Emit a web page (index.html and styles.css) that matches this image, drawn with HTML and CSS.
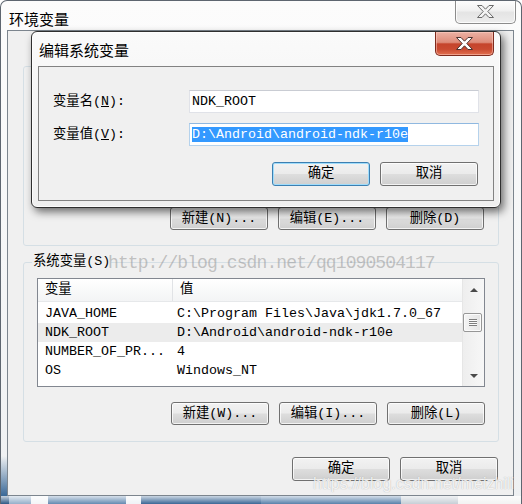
FILE: index.html
```html
<!DOCTYPE html>
<html lang="zh-CN">
<head>
<meta charset="utf-8">
<title>环境变量</title>
<link rel="stylesheet" href="styles.css">
</head>
<body>
<div class="window">
  <div class="titlebar">
    <span class="title">环境变量</span>
    <div class="close close-outer">
      <svg width="17" height="13" viewBox="0 0 17 13"><polygon points="0.5,0.5 5,0.5 8.5,4.2 12,0.5 16.5,0.5 10.8,6.5 16.5,12.5 12,12.5 8.5,8.8 5,12.5 0.5,12.5 6.2,6.5" fill="#f4f4f4" stroke="#6a6a6a" stroke-width="1"/></svg>
    </div>
  </div>
  <div class="client">
    <div class="group user-group">
      <div class="btn-row">
        <button class="btn">新建(N)...</button>
        <button class="btn">编辑(E)...</button>
        <button class="btn">删除(D)</button>
      </div>
    </div>
    <fieldset class="sys-group">
      <legend>系统变量(S)</legend>
      <div class="group-body">
        <div class="listbox">
          <div class="lb-main">
            <div class="lb-head"><div class="c1">变量</div><div class="c2">值</div></div>
            <div class="rows">
              <div class="row"><div class="c1">JAVA_HOME</div><div class="c2">C:\Program Files\Java\jdk1.7.0_67</div></div>
              <div class="row sel"><div class="c1">NDK_ROOT</div><div class="c2">D:\Android\android-ndk-r10e</div></div>
              <div class="row"><div class="c1">NUMBER_OF_PR...</div><div class="c2">4</div></div>
              <div class="row"><div class="c1">OS</div><div class="c2">Windows_NT</div></div>
            </div>
          </div>
          <div class="scrollbar">
            <div class="sb-arrow"><span class="tri up"></span></div>
            <div class="sb-track"><div class="thumb"><span class="grip"></span></div></div>
            <div class="sb-arrow"><span class="tri down"></span></div>
          </div>
        </div>
        <div class="btn-row lower">
          <button class="btn">新建(W)...</button>
          <button class="btn">编辑(I)...</button>
          <button class="btn">删除(L)</button>
        </div>
      </div>
    </fieldset>
    <div class="btn-row main-btns">
      <button class="btn tall">确定</button>
      <button class="btn tall">取消</button>
    </div>
  </div>
  <div class="glass-bottom"></div>

  <div class="dialog">
    <div class="dlg-titlebar">
      <span class="dlg-title">编辑系统变量</span>
      <div class="close close-red">
        <svg width="17" height="13" viewBox="0 0 17 13"><polygon points="0.5,0.5 5,0.5 8.5,4.2 12,0.5 16.5,0.5 10.8,6.5 16.5,12.5 12,12.5 8.5,8.8 5,12.5 0.5,12.5 6.2,6.5" fill="#ffffff" stroke="#4a3330" stroke-width="1"/></svg>
      </div>
    </div>
    <div class="panel">
      <div class="fields">
        <label class="lbl">变量名(<u>N</u>):</label>
        <div class="field">NDK_ROOT</div>
        <label class="lbl">变量值(<u>V</u>):</label>
        <div class="field focused"><span class="selection">D:\Android\android-ndk-r10e</span></div>
      </div>
      <div class="btn-row dlg-btns">
        <button class="btn tall default">确定</button>
        <button class="btn tall">取消</button>
      </div>
    </div>
  </div>

  <div class="wm wm1">http://blog.csdn.net/qq1090504117</div>
  <div class="wm wm2">https://blog.csdn.net/meizhili</div>
</div>
</body>
</html>
```
FILE: styles.css
```css
* { box-sizing: border-box; }
html, body { margin: 0; padding: 0; }
body {
  width: 522px;
  height: 504px;
  overflow: hidden;
  background: #ffffff;
  font-family: "Liberation Mono", "Noto Sans CJK SC", monospace;
  font-size: 13.33px;
  color: #000;
}

.window {
  position: relative;
  width: 522px;
  height: 504px;
  border: 1px solid #5e6670;
  border-bottom: none;
  border-radius: 7px 7px 0 0;
  background:
    linear-gradient(to bottom, rgba(58,104,150,0) 455px, #3a6897 495px) left top / 7px 100% no-repeat,
    linear-gradient(#fcfcfc, #eef0f2);
  display: flex;
  flex-direction: column;
  overflow: hidden;
}

.titlebar {
  flex: none;
  height: 29px;
  display: flex;
  align-items: flex-start;
}
.title {
  font-family: "Noto Sans CJK SC", sans-serif;
  font-size: 15px;
  line-height: 18px;
  margin: 9px 0 0 8px;
}
.close {
  margin-left: auto;
  display: flex;
  align-items: center;
  justify-content: center;
  flex: none;
}
.close-outer {
  width: 61px;
  height: 24px;
  margin-top: -1px;
  margin-right: 5px;
  border: 1px solid #8c8c8c;
  border-top: none;
  border-radius: 0 0 5px 5px;
  background: linear-gradient(#fefefe, #f1f1f1 45%, #e4e4e4 55%, #ededed);
  box-shadow: inset 0 0 0 1px rgba(255,255,255,0.8);
}

.client {
  flex: none;
  margin-left: 6px;
  width: 507px;
  height: 466px;
  border: 1px solid #7c858e;
  background: #f0f0f0;
  padding: 35px 15px 0 15px;
  display: flex;
  flex-direction: column;
}

.group {
  border: 1px solid #d5dfe5;
  border-radius: 3px;
}
.user-group {
  width: 476px;
  height: 180px;
  padding: 0 14px 15px 0;
  display: flex;
  flex-direction: column;
  justify-content: flex-end;
}

.btn-row {
  display: flex;
  justify-content: flex-end;
  gap: 10px;
}
.btn {
  font: inherit;
  color: #000;
  width: 98px;
  height: 23px;
  padding: 0;
  line-height: 21px;
  text-align: center;
  border: 1px solid #707070;
  border-radius: 3px;
  background: linear-gradient(#f2f2f2, #ebebeb 48%, #dddddd 52%, #cfcfcf);
  box-shadow: inset 0 0 0 1px rgba(255,255,255,0.75);
  white-space: nowrap;
}
.btn.tall {
  height: 24px;
  line-height: 22px;
}
.btn.default {
  border-color: #3c7fb1;
  box-shadow: inset 0 0 0 1px #9fdcfb;
}

.sys-group {
  margin: 8px 0 0 0;
  padding: 0;
  width: 476px;
  min-width: 0;
  border: 1px solid #d5dfe5;
  border-radius: 3px;
}
.sys-group legend {
  margin-left: 8px;
  padding: 0 1px;
  line-height: 16px;
  color: #000;
}
.group-body {
  padding: 8px 13px 16px 13px;
}

.listbox {
  height: 109px;
  border: 1px solid #828790;
  background: #ffffff;
  display: flex;
  overflow: hidden;
}
.lb-main {
  flex: 1;
  overflow: hidden;
}
.lb-head {
  height: 23px;
  display: flex;
  background: linear-gradient(#ffffff, #f3f4f5);
  border-bottom: 1px solid #e6e8ea;
  line-height: 22px;
}
.lb-head .c1 {
  width: 135px;
  padding-left: 7px;
  border-right: 1px solid #e1e3e6;
}
.lb-head .c2 {
  padding-left: 7px;
}
.rows {
  padding-top: 2px;
}
.row {
  height: 19px;
  line-height: 19px;
  display: flex;
  white-space: nowrap;
}
.row .c1 {
  width: 135px;
  padding-left: 7px;
}
.row .c2 {
  padding-left: 4px;
}
.row.sel {
  background: #ececec;
}

.scrollbar {
  width: 22px;
  border-left: 1px solid #e6e6e6;
  background: linear-gradient(to right, #eeeeee, #f7f7f7);
  display: flex;
  flex-direction: column;
}
.sb-arrow {
  height: 21px;
  display: flex;
  align-items: center;
  justify-content: center;
}
.tri {
  width: 0;
  height: 0;
  border-left: 4px solid transparent;
  border-right: 4px solid transparent;
}
.tri.up { border-bottom: 4px solid #4a4a4a; }
.tri.down { border-top: 4px solid #4a4a4a; }
.sb-track {
  flex: 1;
  padding-top: 13px;
}
.thumb {
  width: 19px;
  height: 19px;
  border: 1px solid #979797;
  border-radius: 2px;
  background: linear-gradient(to right, #f4f4f4, #e4e4e4);
  box-shadow: inset 0 0 0 1px #fbfbfb;
  display: flex;
  align-items: center;
  justify-content: center;
}
.grip {
  width: 8px;
  height: 7px;
  background: repeating-linear-gradient(#7d7d7d 0 1px, #fafafa 1px 2px);
}

.lower {
  margin-top: 15px;
}
.main-btns {
  margin-top: 15px;
  margin-right: -15px;
  padding-right: 15px;
}

.glass-bottom {
  flex: none;
  height: 8px;
  background:
    linear-gradient(to bottom, rgba(255,255,255,0.75), rgba(255,255,255,0.05)),
    linear-gradient(to right, #23507f 0 8px, #8fabc7 8px 30px, #f3f5f7 30px 47px, #5c84ad 47px 125px, #eef2f6 125px 140px, #315f90 140px 260px, #4f7aa6 260px 400px, #c4ccd4 400px 457px, #f2f2f2 457px);
}

.dialog {
  position: absolute;
  left: 30px;
  top: 30px;
  width: 470px;
  height: 177px;
  border: 1px solid #2f2f2f;
  border-radius: 6px;
  background: linear-gradient(#fafafa, #efefef);
  box-shadow: 3px 4px 9px rgba(0,0,0,0.55), inset 0 0 0 1px rgba(255,255,255,0.8);
  display: flex;
  flex-direction: column;
  z-index: 2;
}
.dlg-titlebar {
  height: 34px;
  display: flex;
  align-items: flex-start;
  flex: none;
}
.dlg-title {
  font-family: "Noto Sans CJK SC", sans-serif;
  font-size: 15px;
  line-height: 18px;
  margin: 9px 0 0 7px;
}
.close-red {
  width: 59px;
  height: 24px;
  margin-right: 6px;
  border: 1px solid #7e2a1d;
  border-top: none;
  border-radius: 0 0 5px 5px;
  background: linear-gradient(#ebb1a4, #de8c7a 45%, #c5442c 52%, #c94a31 75%, #e2704f);
  box-shadow: inset 0 0 0 1px rgba(255,210,200,0.5);
}
.panel {
  flex: none;
  margin: 0 6px;
  height: 135px;
  border: 1px solid #828282;
  background: #f0f0f0;
  padding: 23px 14px 14px 14px;
}
.fields {
  display: grid;
  grid-template-columns: 136px 290px;
  grid-auto-rows: 23px;
  row-gap: 10px;
}
.lbl {
  line-height: 23px;
  white-space: nowrap;
}
.field {
  height: 23px;
  border: 1px solid #e0e2e8;
  border-top-color: #c9ccd3;
  background: #ffffff;
  padding-left: 2px;
  line-height: 21px;
  white-space: nowrap;
}
.field.focused {
  border-color: #b5d2ec;
  border-top-color: #8fb8e0;
}
.selection {
  display: inline-block;
  background: #3399ff;
  color: #ffffff;
  line-height: 15px;
  vertical-align: middle;
}
.dlg-btns {
  margin-top: 16px;
  margin-right: 1px;
}

.wm {
  position: absolute;
  white-space: nowrap;
  z-index: 3;
  pointer-events: none;
}
.wm1 {
  left: 107px;
  top: 252px;
  font-family: "Liberation Mono", monospace;
  font-size: 18px;
  letter-spacing: -0.9px;
  line-height: 20px;
  color: rgba(150,150,150,0.55);
}
.wm2 {
  left: 312px;
  top: 474px;
  font-family: "Liberation Sans", Arial, sans-serif;
  font-size: 16px;
  line-height: 18px;
  color: rgba(255,255,255,0.85);
  text-shadow: 0 0 1px rgba(110,110,110,0.55);
}
```
